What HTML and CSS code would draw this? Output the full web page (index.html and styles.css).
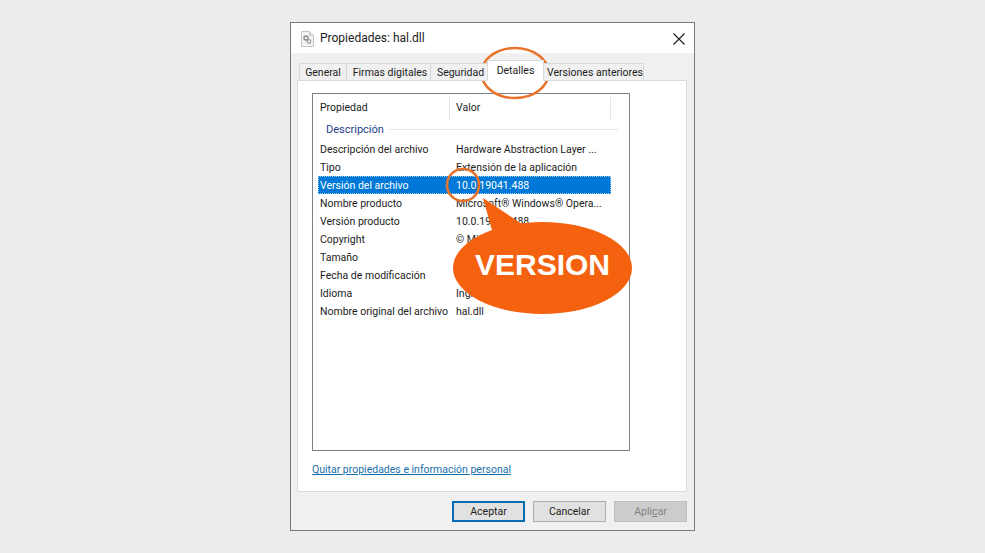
FILE: index.html
```html
<!DOCTYPE html>
<html lang="es">
<head>
<meta charset="utf-8">
<title>Propiedades: hal.dll</title>
<link rel="stylesheet" href="styles.css">
</head>
<body>
<div class="dialog">
  <header class="titlebar">
    <svg class="file-icon" width="13" height="16" viewBox="0 0 13 16"><path d="M.5.5h8l4 4v11H.5z" fill="#f4f4f4" stroke="#c4c4c4"/><path d="M8.5.5v4h4" fill="#e2e2e2" stroke="#c4c4c4"/><circle cx="5" cy="7" r="2" fill="none" stroke="#84888d" stroke-width="1.400"/><circle cx="8" cy="10.500" r="1.800" fill="none" stroke="#9a9ea3" stroke-width="1.300"/></svg>
    <span class="title">Propiedades: hal.dll</span>
    <svg class="close" width="12" height="12" viewBox="0 0 12 12"><path d="M.5.5l11 11M11.500.5l-11 11" stroke="#1a1a1a" stroke-width="1.100" fill="none"/></svg>
  </header>
  <div class="body">
    <nav class="tabs">
      <span class="tab tab-general">General</span>
      <span class="tab tab-firmas">Firmas digitales</span>
      <span class="tab tab-seguridad">Seguridad</span>
      <span class="tab tab-active">Detalles</span>
      <span class="tab tab-versiones">Versiones anteriores</span>
    </nav>
    <section class="panel">
      <div class="list">
        <div class="row head"><span class="cell">Propiedad</span><span class="cell cell-val">Valor</span></div>
        <div class="group"><span>Descripción</span><i></i></div>
        <div class="row"><span class="cell">Descripción del archivo</span><span class="cell cell-val">Hardware Abstraction Layer ...</span></div>
        <div class="row"><span class="cell">Tipo</span><span class="cell cell-val">Extensión de la aplicación</span></div>
        <div class="row selected"><span class="cell">Versión del archivo</span><span class="cell cell-val">10.0.19041.488</span></div>
        <div class="row"><span class="cell">Nombre producto</span><span class="cell cell-val">Microsoft® Windows® Opera...</span></div>
        <div class="row"><span class="cell">Versión producto</span><span class="cell cell-val">10.0.19041.488</span></div>
        <div class="row"><span class="cell">Copyright</span><span class="cell cell-val">© Microsoft</span></div>
        <div class="row"><span class="cell">Tamaño</span><span class="cell cell-val"></span></div>
        <div class="row"><span class="cell">Fecha de modificación</span><span class="cell cell-val"></span></div>
        <div class="row"><span class="cell">Idioma</span><span class="cell cell-val">Inglés</span></div>
        <div class="row"><span class="cell">Nombre original del archivo</span><span class="cell cell-val">hal.dll</span></div>
      </div>
      <a class="link">Quitar propiedades e información personal</a>
    </section>
    <footer class="buttons">
      <span class="btn btn-default">Aceptar</span>
      <span class="btn">Cancelar</span>
      <span class="btn btn-disabled">Apli<u>c</u>ar</span>
    </footer>
  </div>
</div>
<svg class="marks" width="985" height="553" viewBox="0 0 985 553">
  <ellipse cx="515" cy="73" rx="33.500" ry="25" fill="none" stroke="#e8742c" stroke-width="2.600"/>
  <circle cx="463" cy="185" r="16" fill="none" stroke="#e8742c" stroke-width="2.600"/>
  <path d="M483 198L493 234L525 226Z" fill="#f5620f"/>
  <ellipse cx="542.500" cy="268" rx="89.500" ry="46" fill="#f5620f"/>
</svg>
<div class="callout">VERSION</div>
</body>
</html>
```
FILE: styles.css
```css
* { box-sizing: border-box; }
html, body { margin: 0; height: 553px; overflow: hidden; }
body {
  background: #ececec;
  font-family: Roboto, "Liberation Sans", sans-serif;
  font-size: 10.500px;
  color: #1c1c1c;
  padding: 22px 0 0 290px;
  position: relative;
}
.dialog {
  width: 405px;
  height: 509px;
  border: 1px solid #77797b;
  background: #f0f0f0;
  display: flex;
  flex-direction: column;
}
.titlebar {
  height: 30px;
  flex: none;
  background: #fff;
  display: flex;
  align-items: center;
  padding: 0 9px 0 10px;
}
.file-icon { flex: none; margin-top: 1px; }
.title { margin-left: 6px; font-size: 12px; flex: 1; color: #222; padding-bottom: 1px; }
.close { flex: none; margin-top: 1px; }
.body {
  flex: 1;
  display: flex;
  flex-direction: column;
  padding: 7px 7px 8px 6px;
}
.tabs {
  display: flex;
  align-items: flex-end;
  height: 21px;
  padding-left: 2px;
  position: relative;
  z-index: 1;
  margin-bottom: -1px;
}
.tab {
  height: 18px;
  background: #f0f0f0;
  border: 1px solid #d9d9d9;
  margin-left: -1px;
  text-align: center;
  line-height: 18px;
  white-space: nowrap;
  overflow: hidden;
}
.tab-general { width: 48px; margin-left: 0; }
.tab-firmas { width: 85px; padding-left: 3px; }
.tab-seguridad { width: 58px; padding-left: 3px; }
.tab-active {
  width: 57px;
  height: 21px;
  background: #fff;
  border-bottom-color: #fff;
  line-height: 20px;
  position: relative;
}
.tab-versiones { width: 101px; padding-left: 3px; }
.panel {
  height: 412px;
  flex: none;
  background: #fff;
  border: 1px solid #d9d9d9;
  padding: 12px 0 0 14px;
  width: 390px;
}
.list {
  width: 318px;
  height: 358px;
  border: 1px solid #7f8285;
  padding: 3px 0 0 5px;
}
.row {
  display: grid;
  grid-template-columns: 131px 162px;
  width: 293px;
  height: 18px;
  line-height: 20px;
  white-space: nowrap;
}
.cell { padding-left: 2px; overflow: hidden; }
.cell-val { padding-left: 7px; }
.head { height: 23px; line-height: 22px; width: 293px; border-right: 1px solid #e5e5e5; }
.head .cell-val { border-left: 1px solid #e5e5e5; padding-left: 6px; }
.group {
  display: flex;
  align-items: center;
  height: 20px;
  padding: 0 11px 1px 8px;
  color: #24418a;
  font-size: 11px;
}
.group i { flex: 1; height: 1px; background: #e2e6ee; margin-left: 5px; }
.selected {
  background: #0078d7;
  color: #fff;
  outline: 1px dotted #9cc9ee;
  outline-offset: -1px;
}
.link {
  display: block;
  margin-top: 12px;
  color: #1a6ea8;
  text-decoration: underline;
}
.buttons {
  display: flex;
  justify-content: flex-end;
  gap: 8px;
  margin-top: 9px;
}
.btn {
  width: 73px;
  height: 21px;
  background: #e1e1e1;
  border: 1px solid #adadad;
  text-align: center;
  line-height: 19px;
}
.btn-default { border: 2px solid #0a6cb5; line-height: 17px; }
.btn-disabled { background: #cccccc; border-color: #bfbfbf; color: #838383; }
.marks { position: absolute; left: 0; top: 0; }
.callout {
  position: absolute;
  left: 475px;
  top: 246px;
  color: #fff;
  font: bold 30px/38px "Liberation Sans", sans-serif;
}
```
